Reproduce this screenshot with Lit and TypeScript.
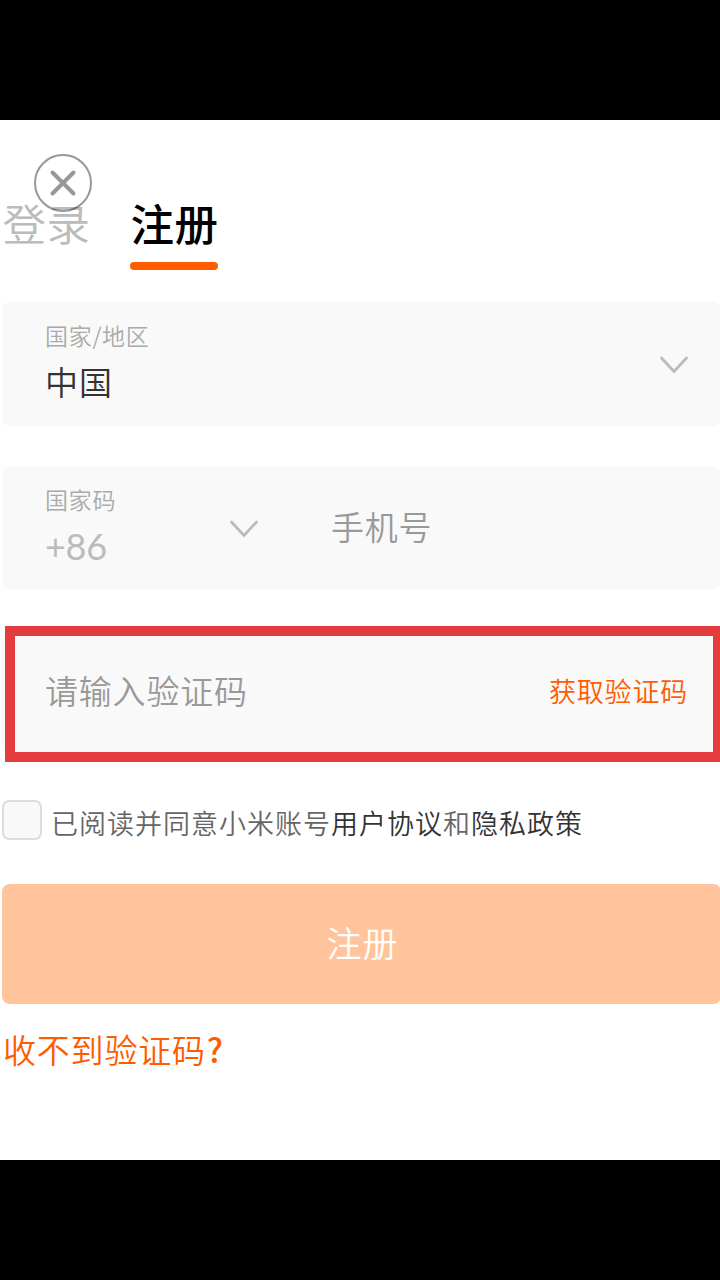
import { LitElement, html, css } from "lit";
import { customElement } from "lit/decorators.js";

@customElement("app-root")
export class AppRoot extends LitElement {
  static styles = css`
    :host {
      display: block;
      width: 720px;
      height: 1280px;
      padding: 120px 0;
      box-sizing: border-box;
      overflow: hidden;
      background: #000;
      font-family: "Noto Sans CJK SC", sans-serif;
      font-weight: 350;
    }
    * { box-sizing: border-box; }
    .page {
      position: relative;
      height: 1040px;
      padding: 71px 0 0 2px;
      background: #fff;
      white-space: nowrap;
      overflow: hidden;
    }
    .close { position: absolute; left: 33px; top: 33px; display: block; }
    .tabs { display: flex; gap: 40px; height: 79px; }
    .tab {
      width: 88px;
      font-size: 43.5px;
      line-height: 64px;
      letter-spacing: 0.4px;
      text-indent: 0.5px;
      color: #bbb;
    }
    .tab.active { color: #000; font-weight: 500; }
    .bar { height: 8px; border-radius: 4px; background: #ff5c00; margin-top: 7px; }
    .field {
      position: relative;
      display: flex;
      align-items: center;
      width: 719px;
      height: 124px;
      margin-top: 32px;
      padding: 2px 33px 0 43px;
      border-radius: 8px;
      background: #f9f9f9;
    }
    .field + .field { margin-top: 40px; }
    .stack { flex: 1; }
    .stack.code { flex: none; width: 185px; }
    .label { font-size: 23px; line-height: 32px; letter-spacing: 0.7px; color: #aaa; }
    .value { font-size: 33px; line-height: 60px; letter-spacing: 1px; color: #333; }
    .value.dim { padding-top: 2px; line-height: 58px; color: #bbb; font-family: Lato, sans-serif; font-weight: 400; font-size: 36px; letter-spacing: -0.3px; }
    .hint { padding-bottom: 7px; font-size: 33px; letter-spacing: 0.8px; color: #999; }
    .phone { margin-left: 73px; }
    .verify { justify-content: space-between; }
    .frame {
      position: absolute;
      left: 3px;
      top: -4px;
      width: 718px;
      height: 136px;
      border: 10px solid #e33c3d;
    }
    .send { padding-bottom: 6px; font-size: 27px; letter-spacing: 0.8px; color: #ff5c00; }
    .agree {
      display: flex;
      align-items: center;
      gap: 9px;
      height: 40px;
      margin-top: 46px;
      font-size: 27px;
      letter-spacing: 1px;
      color: #666;
    }
    .terms { padding-top: 5px; }
    .check { width: 40px; height: 40px; border: 2px solid #ddd; border-radius: 7px; background: #f9f9f9; }
    .link { color: #333; }
    .submit {
      display: flex;
      align-items: center;
      justify-content: center;
      width: 719px;
      height: 120px;
      margin-top: 44px;
      padding: 0 0 5px 2px;
      border-radius: 8px;
      background: #ffc49b;
      color: #fff;
      font-size: 35px;
      letter-spacing: 1px;
    }
    .help { margin-top: 21px; padding-left: 1px; font-size: 33px; line-height: 48px; letter-spacing: 0.8px; color: #ff5c00; }
    .mark { font-weight: 500; margin-left: 1px; }
  `;

  chevron() {
    return html`<svg width="28" height="20" viewBox="0 0 28 20" fill="none"><path d="M1.500 3 14 16.500 26.500 3" stroke="#bbb" stroke-width="2.8" stroke-linecap="round" /></svg>`;
  }

  render() {
    return html`
      <main class="page">
        <nav class="tabs">
          <div class="tab">登录</div>
          <div class="tab active">注册<div class="bar"></div></div>
        </nav>
        <svg class="close" width="60" height="60" fill="none" stroke="#000" opacity="0.4">
          <circle cx="30" cy="30" r="28" stroke-width="2" />
          <path d="M19.500 19.500 40.500 40.500M40.500 19.500 19.500 40.500" stroke-width="4" stroke-linecap="round" />
        </svg>
        <section class="field">
          <div class="stack"><div class="label">国家/地区</div><div class="value">中国</div></div>
          ${this.chevron()}
        </section>
        <section class="field">
          <div class="stack code"><div class="label">国家码</div><div class="value dim">+86</div></div>
          ${this.chevron()}
          <span class="hint phone">手机号</span>
        </section>
        <section class="field verify">
          <span class="hint">请输入验证码</span><span class="send">获取验证码</span>
          <div class="frame"></div>
        </section>
        <div class="agree"><span class="check"></span><span class="terms">已阅读并同意小米账号<span class="link">用户协议</span>和<span class="link">隐私政策</span></span></div>
        <div class="submit">注册</div>
        <div class="help">收不到验证码<span class="mark">?</span></div>
      </main>
    `;
  }
}
